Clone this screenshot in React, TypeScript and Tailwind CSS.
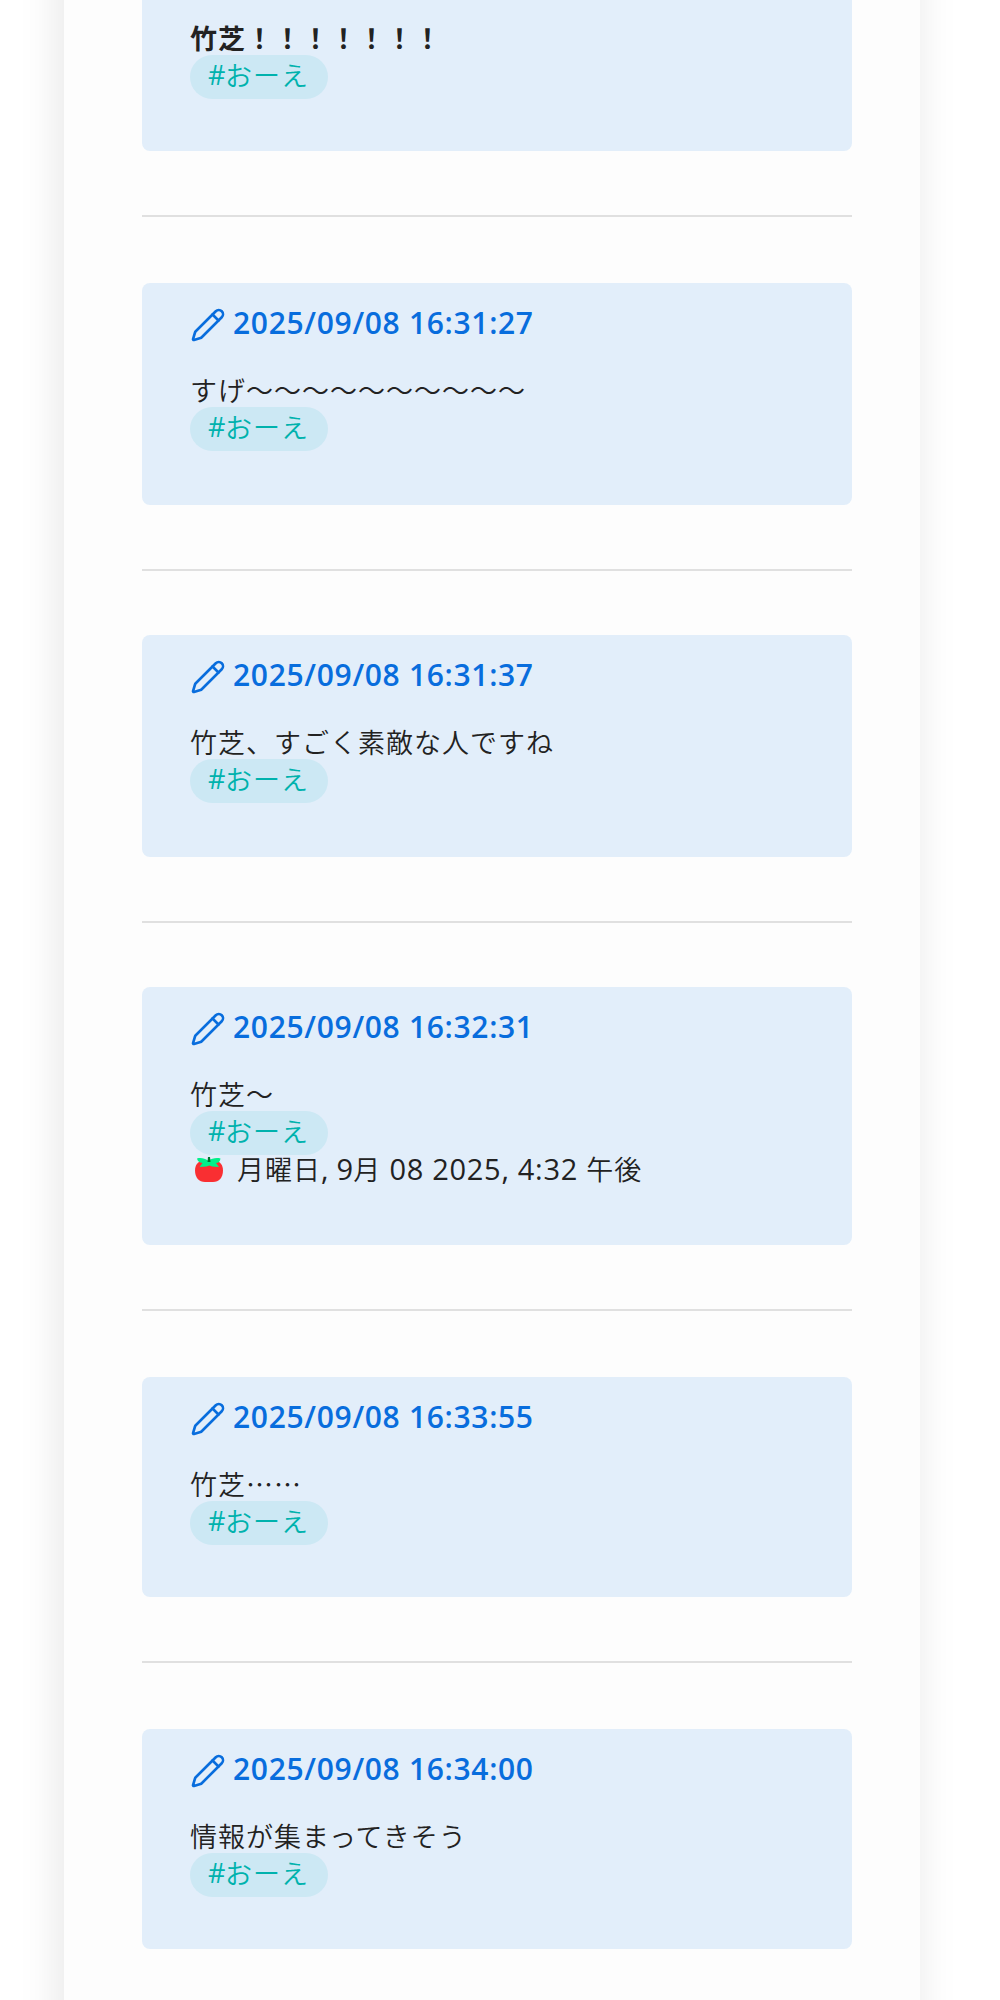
import React from "react";
import { Pencil } from "lucide-react";

type Note = {
  time: string;
  text: string;
  height: string;
  gap: string;
  stamp?: boolean;
};

const notes: Note[] = [
  { time: "2025/09/08 16:31:27", text: "すげ〜〜〜〜〜〜〜〜〜〜", height: "h-[222px]", gap: "pb-16" },
  { time: "2025/09/08 16:31:37", text: "竹芝、すごく素敵な人ですね", height: "h-[222px]", gap: "pb-16" },
  { time: "2025/09/08 16:32:31", text: "竹芝〜", height: "h-[258px]", gap: "pb-[66px]", stamp: true },
  { time: "2025/09/08 16:33:55", text: "竹芝……", height: "h-[220px]", gap: "pb-[66px]" },
  { time: "2025/09/08 16:34:00", text: "情報が集まってきそう", height: "h-[220px]", gap: "" },
];

function Tag() {
  return (
    <span className="flex h-11 w-[138px] items-center rounded-full bg-[#cce8f4] pb-[5px] pl-[18px] text-[#00b2ad]">
      <span className="w-[17px] font-['Open_Sans',sans-serif] font-normal">#</span>
      <span>おーえ</span>
    </span>
  );
}

function Divider({ gap }: { gap: string }) {
  return (
    <div className={`pt-16 ${gap}`}>
      <div className="h-0.5 bg-[#e0e0e0]" />
    </div>
  );
}

function Tomato() {
  return (
    <svg viewBox="0 0 28 25" className="mt-[3px] mr-3.5 ml-[5px] h-[25px] w-7 shrink-0">
      <path
        d="M8 4h12c5 0 8 4 8 9.500C28 20.500 24 25 18 25h-8C4 25 0 20.500 0 13.500 0 8 3 4 8 4z"
        fill="#f92f32"
      />
      <path
        d="M2 1.500c4-1 8 0 11 2 4-2 8-3 12.500-2-.5 3-2 4.500-4.500 4.500l3 4-7-.5-2.500-1-3 1-7 .5 3-4C4 5.500 2.500 4 2 1.500z"
        fill="#00f08a"
      />
      <path d="M13 0h2l.5 5h-3z" fill="#00752f" />
    </svg>
  );
}

function Stamp() {
  return (
    <div className="flex h-[26px] items-center whitespace-pre">
      <Tomato />
      <span>月曜日</span>
      <span className="font-['Open_Sans',sans-serif] text-[29px] font-normal tracking-[0.2px]">, 9</span>
      <span>月</span>
      <span className="font-['Open_Sans',sans-serif] text-[29px] font-normal tracking-[0.7px]"> 08 2025, 4:32 </span>
      <span>午後</span>
    </div>
  );
}

function Card({ note }: { note: Note }) {
  return (
    <article className={`rounded-lg bg-[#e2eefa] px-12 ${note.height}`}>
      <header className="flex h-20 items-center gap-[7px] text-[#086ddd]">
        <Pencil size={36} strokeWidth={1.75} className="mt-1" />
        <h2 className="font-['Open_Sans',sans-serif] text-[30px] font-semibold tracking-[0.68px]">
          {note.time}
        </h2>
      </header>
      <p className="flex h-11 items-center pt-2">{note.text}</p>
      <Tag />
      {note.stamp && <Stamp />}
    </article>
  );
}

export default function App() {
  return (
    <div className="h-[2000px] overflow-hidden bg-white pr-20 pl-16">
      <main
        lang="ja"
        className="-mt-16 h-[2160px] bg-[#fdfdfd] pt-16 pr-[68px] pl-[78px] font-['Noto_Sans_CJK_JP',sans-serif] text-[27px] leading-none font-[350] tracking-[1px] text-[#222] shadow-[-4px_0_40px_rgba(0,0,0,0.1)]"
      >
        <article className="h-[151px] rounded-b-lg bg-[#e2eefa] px-12">
          <p className="flex h-[55px] items-center pt-[19px] font-bold">竹芝！！！！！！！</p>
          <Tag />
        </article>
        <Divider gap="pb-[66px]" />
        {notes.map((note, i) => (
          <React.Fragment key={note.time}>
            <Card note={note} />
            {i < notes.length - 1 && <Divider gap={note.gap} />}
          </React.Fragment>
        ))}
      </main>
    </div>
  );
}
